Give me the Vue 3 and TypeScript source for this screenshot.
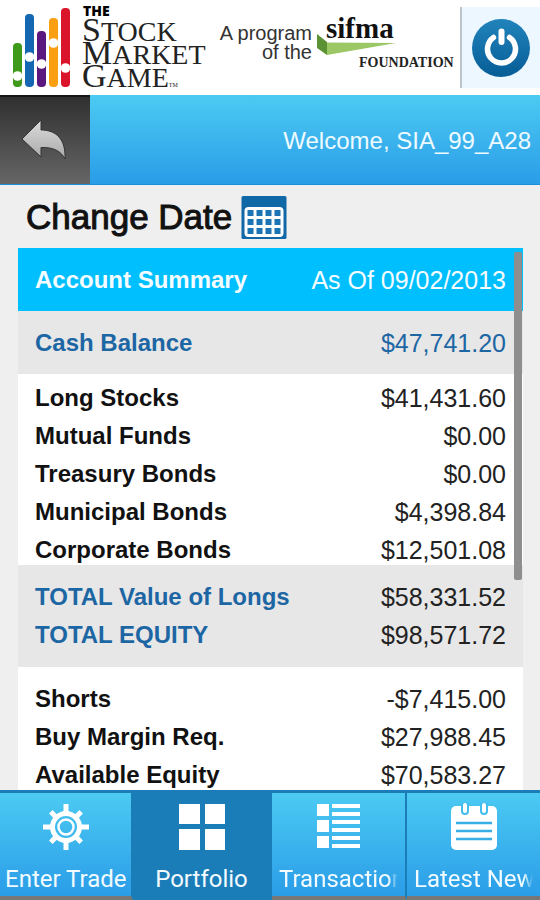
<script setup lang="ts">
interface Row {
  label: string
  value: string
}

interface Section {
  kind: 'cash' | 'holdings' | 'totals' | 'margin'
  rows: Row[]
}

const sections: Section[] = [
  { kind: 'cash', rows: [{ label: 'Cash Balance', value: '$47,741.20' }] },
  {
    kind: 'holdings',
    rows: [
      { label: 'Long Stocks', value: '$41,431.60' },
      { label: 'Mutual Funds', value: '$0.00' },
      { label: 'Treasury Bonds', value: '$0.00' },
      { label: 'Municipal Bonds', value: '$4,398.84' },
      { label: 'Corporate Bonds', value: '$12,501.08' },
    ],
  },
  {
    kind: 'totals',
    rows: [
      { label: 'TOTAL Value of Longs', value: '$58,331.52' },
      { label: 'TOTAL EQUITY', value: '$98,571.72' },
    ],
  },
  {
    kind: 'margin',
    rows: [
      { label: 'Shorts', value: '-$7,415.00' },
      { label: 'Buy Margin Req.', value: '$27,988.45' },
      { label: 'Available Equity', value: '$70,583.27' },
    ],
  },
]

const bars = [
  { x: 13, top: 43, notch: 76, color: '#3f9a1c' },
  { x: 25, top: 14, notch: 57, color: '#1467b0' },
  { x: 37, top: 31, notch: 64, color: '#5a1780' },
  { x: 49, top: 18, notch: 43, color: '#f99f10' },
  { x: 61, top: 8, notch: 68, color: '#d9142b' },
]

const teeth = [0, 45, 90, 135, 180, 225, 270, 315]
</script>

<template>
  <div class="app">
    <header class="brand">
      <svg class="logo" width="215" height="95" viewBox="0 0 215 95" role="img" aria-label="The Stock Market Game">
        <g v-for="bar in bars" :key="bar.x">
          <rect :x="bar.x" :y="bar.top" width="9" :height="87 - bar.top" rx="4" :fill="bar.color" />
          <circle :cx="bar.x + 4.5" :cy="bar.notch" r="4.8" fill="#fff" />
        </g>
        <text x="83" y="16" class="the">THE</text>
        <text x="82" y="41" class="cap">S<tspan class="small">TOCK</tspan></text>
        <text x="82" y="64" class="cap">M<tspan class="small">ARKET</tspan></text>
        <text x="82" y="87" class="cap">G<tspan class="small">AME</tspan><tspan class="tm">TM</tspan></text>
      </svg>
      <svg class="sponsor" width="245" height="95" viewBox="0 0 245 95" role="img" aria-label="A program of the SIFMA Foundation">
        <text x="97" y="40" text-anchor="end" class="program">A program</text>
        <text x="97" y="59" text-anchor="end" class="program">of the</text>
        <path d="M102 34 L112 42 V55 L102 48 Z" fill="#5b9233" />
        <path d="M112 42.500 L181 43 L112 55 Z" fill="#9cc765" />
        <text x="111" y="38" class="sifma">sifma</text>
        <text x="144" y="67" class="foundation">FOUNDATION</text>
      </svg>
      <button class="power" type="button" aria-label="Log out">
        <svg width="60" height="60" viewBox="0 0 60 60" aria-hidden="true">
          <defs>
            <linearGradient id="powerFill" x1="0" y1="0" x2="0" y2="1">
              <stop offset="0" stop-color="#2183bb" />
              <stop offset="1" stop-color="#075d96" />
            </linearGradient>
          </defs>
          <circle cx="30" cy="30" r="29" fill="url(#powerFill)" />
          <path d="M22.500 19.500 A14 14 0 1 0 38.500 19.500" fill="none" stroke="#fff" stroke-width="5.500" stroke-linecap="round" />
          <path d="M30.500 13.500 V24" stroke="#fff" stroke-width="6" stroke-linecap="round" />
        </svg>
      </button>
    </header>

    <div class="banner">
      <button class="back" type="button" aria-label="Back">
        <svg width="46" height="42" viewBox="0 0 46 42" aria-hidden="true">
          <defs>
            <linearGradient id="arrowFill" x1="0" y1="0" x2="0" y2="1">
              <stop offset="0" stop-color="#dcdcdc" />
              <stop offset="1" stop-color="#a9a9a9" />
            </linearGradient>
          </defs>
          <path d="M0 19 L19 0 V10 C34 10 44 19 43 39 C39 31 31 27 19 27.500 V37 Z" fill="url(#arrowFill)" stroke="#333" stroke-width="1" />
        </svg>
      </button>
      <p class="welcome">Welcome, SIA_99_A28</p>
    </div>

    <main class="content">
      <button class="change-date" type="button">
        <span>Change Date</span>
        <svg width="46" height="44" viewBox="0 0 46 44" aria-hidden="true">
          <rect x="0.500" y="1" width="45" height="43" rx="1.500" fill="#1168a6" />
          <rect x="3.500" y="12" width="39" height="30" rx="4" fill="#fff" />
          <template v-for="row in 3" :key="row">
            <rect
              v-for="col in 4"
              :key="col"
              :x="col * 9 - 2.500"
              :y="row * 9 + 6"
              width="6"
              height="6"
              fill="#1b75b5"
            />
          </template>
        </svg>
      </button>

      <div class="panel">
        <table class="summary">
          <thead>
            <tr>
              <th scope="col">Account Summary</th>
              <th scope="col" class="date">As Of 09/02/2013</th>
            </tr>
          </thead>
          <tbody v-for="section in sections" :key="section.kind" :class="section.kind">
            <tr v-for="row in section.rows" :key="row.label">
              <th scope="row">{{ row.label }}</th>
              <td>{{ row.value }}</td>
            </tr>
          </tbody>
        </table>
        <div class="thumb"></div>
      </div>
    </main>

    <nav class="tabs" aria-label="Main">
      <a href="#trade" class="tab">
        <svg width="48" height="48" viewBox="0 0 48 48" aria-hidden="true">
          <g fill="#fff">
            <rect
              v-for="angle in teeth"
              :key="angle"
              x="21.500"
              :y="angle % 90 ? 2.500 : 1"
              width="5"
              height="9"
              :transform="`rotate(${angle} 24 24)`"
            />
          </g>
          <circle cx="24" cy="24" r="13.500" fill="none" stroke="#fff" stroke-width="5" />
          <circle cx="24" cy="24" r="7.500" fill="none" stroke="#fff" stroke-width="2.500" />
        </svg>
        <span class="tab-label">Enter Trade</span>
      </a>
      <a href="#portfolio" class="tab active" aria-current="page">
        <svg width="48" height="48" viewBox="0 0 48 48" fill="#fff" aria-hidden="true">
          <rect x="1" y="1" width="21" height="20" />
          <rect x="27" y="1" width="20" height="20" />
          <rect x="1" y="26" width="21" height="21" />
          <rect x="27" y="26" width="20" height="21" />
        </svg>
        <span class="tab-label">Portfolio</span>
      </a>
      <a href="#transactions" class="tab clipped">
        <svg width="48" height="48" viewBox="0 0 48 48" fill="#fff" aria-hidden="true">
          <template v-for="n in 3" :key="n">
            <rect x="2" :y="n * 16 - 15" width="12" height="12" />
            <rect x="17" :y="n * 16 - 15" width="28" height="4" />
            <rect x="17" :y="n * 16 - 7" width="28" height="4" />
          </template>
        </svg>
        <span class="tab-label">Transactions</span>
      </a>
      <a href="#news" class="tab clipped">
        <svg width="48" height="48" viewBox="0 0 48 48" aria-hidden="true">
          <rect x="1" y="3" width="46" height="44" rx="5" fill="#fff" />
          <g stroke-linecap="round">
            <path d="M15 1 V8 M34 1 V8" stroke="#43bdec" stroke-width="8" />
            <path d="M15 2 V8 M34 2 V8" stroke="#fff" stroke-width="4" />
          </g>
          <path d="M6 20 H42 M6 28 H42 M6 36 H42" stroke="#37aee6" stroke-width="2.500" />
        </svg>
        <span class="tab-label">Latest News</span>
      </a>
    </nav>
  </div>
</template>

<style>
body {
  margin: 0;
  background: #efefef;
}
</style>

<style scoped>
.app {
  display: flex;
  flex-direction: column;
  height: 100vh;
  overflow: hidden;
  background: #efefef;
  color: #111;
  font-family: "Liberation Sans", Arial, sans-serif;
}

button {
  margin: 0;
  padding: 0;
  border: 0;
  background: none;
  color: inherit;
  font: inherit;
  cursor: pointer;
}

svg {
  display: block;
  flex: none;
}

.brand {
  display: flex;
  flex: none;
  justify-content: space-between;
  align-items: center;
  height: 95px;
  background: #fff;
}

.the {
  font: 800 14px "Open Sans", sans-serif;
}

.cap {
  font: 34px "Liberation Serif", serif;
  fill: #222;
}

.small {
  font-size: 28px;
}

.tm {
  font-size: 6px;
}

.program {
  font: 20px "Liberation Sans", sans-serif;
  fill: #333;
}

.sifma {
  font: bold 29px "Liberation Serif", serif;
  fill: #111;
}

.foundation {
  font: bold 14px "Liberation Serif", serif;
  fill: #222;
}

.power {
  display: flex;
  flex: none;
  align-items: center;
  justify-content: center;
  width: 80px;
  height: 81px;
  border-left: 2px solid #bcc4cc;
  background: #edf7ff;
}

.banner {
  display: flex;
  flex: none;
  height: 90px;
  box-sizing: border-box;
  border-bottom: 1px solid #1c8fdc;
  background: linear-gradient(#4ccaf2, #2a9de8);
}

.back {
  display: flex;
  align-items: center;
  justify-content: center;
  width: 90px;
  border-top: 2px solid #161616;
  background: linear-gradient(#303030, #666);
}

.welcome {
  flex: 1;
  margin: 0;
  padding-right: 9px;
  color: #eefaff;
  font-size: 24px;
  line-height: 92px;
  text-align: right;
}

.content {
  display: flex;
  flex: 1;
  flex-direction: column;
  align-items: flex-start;
  min-height: 0;
  padding: 0 17px 0 18px;
}

.change-date {
  display: flex;
  flex: none;
  align-items: center;
  gap: 9px;
  height: 63px;
  padding-left: 8px;
  font-size: 35px;
  line-height: 36px;
  -webkit-text-stroke: 1px #111;
}

.panel {
  position: relative;
  flex: 1;
  width: 100%;
  min-height: 0;
  overflow: hidden;
  background: #fff;
}

.summary {
  width: 100%;
  border-collapse: collapse;
  font-size: 24px;
  line-height: 28px;
}

.summary th,
.summary td {
  padding: 5px 17px;
  white-space: nowrap;
}

.summary th:first-child {
  padding-right: 0;
  text-align: left;
}

.summary td,
.summary .date {
  padding-left: 8px;
  font-size: 25px;
  font-weight: 400;
  text-align: right;
}

.summary td {
  color: #222;
}

.summary thead th {
  padding-top: 18px;
  padding-bottom: 17px;
  background: #00bfff;
  color: #f4fcff;
}

.cash,
.totals {
  background: #e7e7e7;
}

.summary .cash th,
.summary .cash td,
.summary .totals th {
  color: #1d66a4;
}

.summary .cash th,
.summary .cash td {
  padding-top: 18px;
  padding-bottom: 17px;
}

.summary .holdings tr:first-child > * {
  padding-top: 10px;
}

.summary .holdings tr:last-child > * {
  padding-bottom: 1px;
}

.summary .totals tr:first-child > *,
.summary .margin tr:first-child > * {
  padding-top: 18px;
}

.summary .totals tr:last-child > * {
  padding-bottom: 18px;
}

.thumb {
  position: absolute;
  top: 4px;
  right: 1px;
  width: 8px;
  height: 328px;
  border-radius: 2px;
  background: #8e8e8e;
}

.tabs {
  display: grid;
  flex: none;
  grid-template-columns: 133fr 139fr 135fr 133fr;
  height: 110px;
  box-sizing: border-box;
  border-top: 3px solid #1b7db8;
  background: #1b7db8;
}

.tab {
  display: flex;
  flex-direction: column;
  align-items: center;
  gap: 13px;
  min-width: 0;
  padding: 10px 5px 0;
  border-right: 2px solid #1b7db8;
  border-bottom: 4px solid #777;
  background: linear-gradient(#4ccaf2, #2a9de8);
  color: #f2fbff;
  text-decoration: none;
}

.tab:last-child {
  border-right: 0;
}

.tab.active {
  border-bottom-color: #1b7db8;
  background: #1b7db8;
}

.tab-label {
  max-width: 100%;
  overflow: hidden;
  font-family: Roboto, sans-serif;
  font-size: 24px;
  line-height: 30px;
  white-space: nowrap;
}

.tab.clipped {
  padding: 10px 7px 0;
}

.clipped .tab-label {
  mask-image: linear-gradient(to right, #000 92%, transparent);
}
</style>
